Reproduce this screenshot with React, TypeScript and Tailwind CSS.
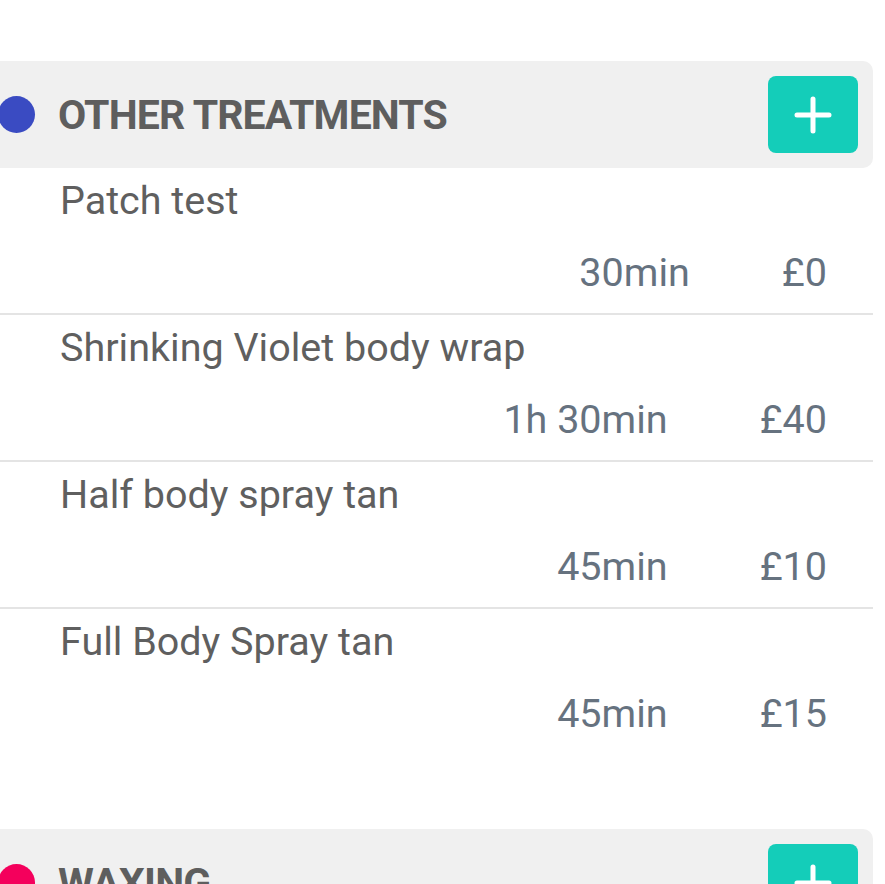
import React from 'react'

interface Service {
  name: string
  duration: string
  price: string
}

interface CategoryProps {
  title: string
  dot: string
  services: Service[]
}

const other: Service[] = [
  { name: 'Patch test', duration: '30min', price: '£0' },
  { name: 'Shrinking Violet body wrap', duration: '1h 30min', price: '£40' },
  { name: 'Half body spray tan', duration: '45min', price: '£10' },
  { name: 'Full Body Spray tan', duration: '45min', price: '£15' },
]

function PlusButton() {
  return (
    <button className="w-[90px] h-[77px] rounded-[8px] bg-[#14cdb9] flex items-center justify-center flex-shrink-0">
      <svg width="38" height="38" viewBox="0 0 38 38" fill="none">
        <path d="M19 3v32M3 19h32" stroke="#fff" strokeWidth="5" strokeLinecap="round" />
      </svg>
    </button>
  )
}

function Category({ title, dot, services }: CategoryProps) {
  return (
    <section>
      {/* Header */}
      <div className="bg-[#f0f0f0] rounded-r-[10px] flex items-center py-[15px] pr-[15px]">
        <span className="w-[37px] h-[37px] rounded-full ml-[-2px] flex-shrink-0" style={{ background: dot }} />
        <h2 className="ml-[23px] flex-1 text-[41px] leading-[46px] font-bold text-[#5e5e5e] tracking-[-0.85px]">
          {title}
        </h2>
        <PlusButton />
      </div>

      {/* Rows */}
      {services.map((s, i) => (
        <div
          key={s.name}
          className={
            i < services.length - 1
              ? 'pt-[10px] pb-[17px] pl-[60px] pr-[46px] border-b-2 border-[#e4e4e4]'
              : 'pt-[10px] pb-[17px] pl-[60px] pr-[46px] border-b-2 border-transparent'
          }
        >
          <div className="text-[39.5px] leading-[46px] text-[#5f5f5f]">{s.name}</div>
          <div className="mt-[26px] flex justify-end items-center gap-[92px] text-[39.5px] leading-[46px] text-[#66727f]">
            <span>{s.duration}</span>
            <span>{s.price}</span>
          </div>
        </div>
      ))}
    </section>
  )
}

export default function App() {
  return (
    <div className="w-[885px] h-[884px] overflow-hidden bg-white font-['Roboto',sans-serif]">
      <div className="pt-[61px] w-[873px]">
        <Category title="OTHER TREATMENTS" dot="#3a4bc2" services={other} />
        <div className="mt-[73px]">
          <Category title="WAXING" dot="#f4005c" services={[]} />
        </div>
      </div>
    </div>
  )
}
